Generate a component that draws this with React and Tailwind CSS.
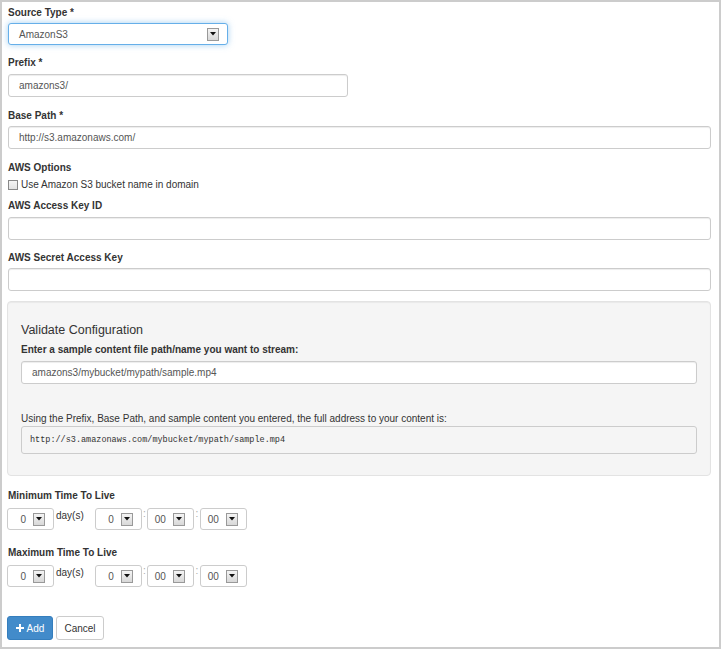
import React from "react";

const font = "font-['Liberation_Sans',Arial,sans-serif]";

function Label({ children, className = "" }) {
  return <div className={`text-[10px] leading-[15px] font-bold text-[#333] ml-[1px] ${className}`}>{children}</div>;
}

function Input({ value = "", className = "" }) {
  return (
    <div className={`h-[23px] border border-[#ccc] rounded-[3px] bg-white px-[10px] flex items-center text-[10px] text-[#555] shadow-[inset_0_1px_1px_rgba(0,0,0,0.075)] ${className}`}>
      {value}
    </div>
  );
}

function Arrow() {
  return (
    <span className="w-[12px] h-[13px] border border-[#999] bg-gradient-to-b from-[#f4f4f4] to-[#d8d8d8] flex items-center justify-center">
      <svg width="6" height="4" viewBox="0 0 6 4">
        <path d="M0 0 L6 0 L3 3.5 Z" fill="#111" />
      </svg>
    </span>
  );
}

function TimeSelect({ value }) {
  return (
    <div className="w-[47px] h-[22px] border border-[#ccc] rounded-[3px] bg-white flex items-center justify-end gap-[7px] pr-[8px] text-[10px] text-[#555]">
      <span>{value}</span>
      <Arrow />
    </div>
  );
}

function TimeRow() {
  return (
    <div className="flex items-start mt-[5px] text-[10px] text-[#333]">
      <TimeSelect value="0" />
      <span className="ml-[2px] mt-[1px] leading-[13px]">day(s)</span>
      <div className="ml-[11px]"><TimeSelect value="0" /></div>
      <span className="w-[5px] text-center leading-[12px] text-[#aaa]">:</span>
      <TimeSelect value="00" />
      <span className="w-[6px] text-center leading-[12px] text-[#aaa]">:</span>
      <TimeSelect value="00" />
    </div>
  );
}

export default function App() {
  return (
    <div className={`w-[721px] h-[649px] border-2 border-[#ccc] bg-white ${font} text-[#333]`}>
      <div className="pl-[5px] pr-[8px] pt-[3px]">
        <Label>Source Type *</Label>
        <div className="mt-[3px] w-[220px] h-[22px] ml-[1px] border border-[#66afe9] rounded-[3px] bg-white flex items-center justify-between pl-[10px] pr-[8px] text-[10px] text-[#555] shadow-[0_0_6px_rgba(102,175,233,0.6)]">
          <span>AmazonS3</span>
          <Arrow />
        </div>

        <Label className="mt-[10px]">Prefix *</Label>
        <Input value="amazons3/" className="mt-[4px] w-[340px] ml-[1px]" />

        <Label className="mt-[11px]">Base Path *</Label>
        <Input value="http://s3.amazonaws.com/" className="mt-[3px] ml-[1px]" />

        <Label className="mt-[11px]">AWS Options</Label>
        <label className="mt-[2px] ml-[1px] flex items-center gap-[3px] text-[10px] leading-[15px] text-[#333]">
          <span className="w-[10px] h-[10px] border border-[#888] bg-gradient-to-b from-[#f4f4f4] to-[#e2e2e2]" />
          <span>Use Amazon S3 bucket name in domain</span>
        </label>

        <Label className="mt-[6px]">AWS Access Key ID</Label>
        <Input className="mt-[4px] ml-[1px]" />

        <Label className="mt-[10px]">AWS Secret Access Key</Label>
        <Input className="mt-[3px] ml-[1px]" />

        <div className="mt-[10px] h-[175px] border border-[#e3e3e3] rounded-[4px] bg-[#f5f5f5] px-[13px] pt-[18px] shadow-[inset_0_1px_1px_rgba(0,0,0,0.05)]">
          <div className="text-[12.5px] leading-[20px] text-[#333]">Validate Configuration</div>
          <div className="mt-[2px] text-[10px] leading-[15px] font-bold">Enter a sample content file path/name you want to stream:</div>
          <Input value="amazons3/mybucket/mypath/sample.mp4" className="mt-[4px] h-[23px]" />
          <div className="mt-[27px] text-[10px] leading-[15px]">
            Using the Prefix, Base Path, and sample content you entered, the full address to your content is:
          </div>
          <div className="h-[28px] border border-[#ccc] rounded-[3px] bg-[#f5f5f5] px-[8px] flex items-center font-['Liberation_Mono',monospace] text-[8.5px] text-[#333]">
            http://s3.amazonaws.com/mybucket/mypath/sample.mp4
          </div>
        </div>

        <Label className="mt-[12px]">Minimum Time To Live</Label>
        <TimeRow />

        <Label className="mt-[15px]">Maximum Time To Live</Label>
        <TimeRow />

        <div className="mt-[29px] flex gap-[3px]">
          <button className="h-[24px] w-[46px] justify-center rounded-[3px] bg-[#428bca] border border-[#357ebd] text-white text-[10px] flex items-center gap-[3px]">
            <svg width="8" height="8" viewBox="0 0 8 8">
              <path d="M3 0h2v3h3v2H5v3H3V5H0V3h3z" fill="#fff" />
            </svg>
            Add
          </button>
          <button className="h-[24px] w-[48px] rounded-[3px] bg-white border border-[#ccc] text-[#333] text-[10px]">
            Cancel
          </button>
        </div>
      </div>
    </div>
  );
}
